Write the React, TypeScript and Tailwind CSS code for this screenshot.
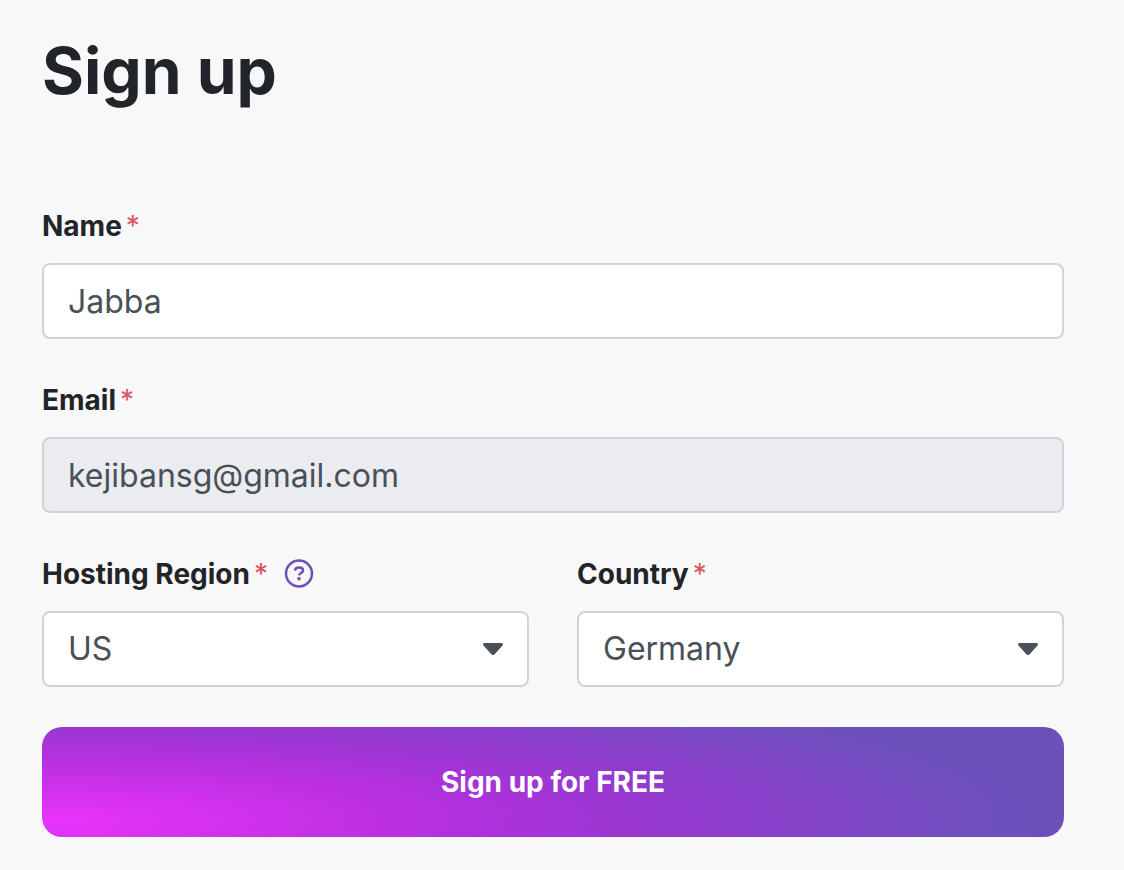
import type { ReactNode } from 'react';

const CONTROL =
  'block w-full h-[76px] px-6 rounded-lg border-2 border-[#ced4da] text-[32px] leading-[48px] text-[#495057] outline-none focus:border-[#6b50b8]';

interface FieldProps {
  id: string;
  label: string;
  hint?: ReactNode;
  children: ReactNode;
}

function Field({ id, label, hint, children }: FieldProps) {
  return (
    <div className="flex flex-col gap-4">
      <div className="flex items-center gap-4 h-[42px]">
        <label htmlFor={id} className="flex gap-1 text-[28px] leading-[42px] font-bold text-[#212529]">
          {label}
          <span className="font-normal text-[#dc5563]">*</span>
        </label>
        {hint}
      </div>
      {children}
    </div>
  );
}

function HelpIcon() {
  return (
    <svg width="30" height="30" viewBox="0 0 30 30" fill="none" stroke="#6b4fbb" aria-hidden="true">
      <circle cx="15" cy="14.500" r="13" strokeWidth="2.500" />
      <path d="M11 11.500C11.300 9.500 12.900 8.500 15 8.500c2.300 0 4 1.100 4 2.900 0 2.600-3.700 2.500-3.900 5" strokeWidth="2.600" />
      <circle cx="15" cy="19.800" r="1.800" fill="#6b4fbb" stroke="none" />
    </svg>
  );
}

interface SelectProps {
  id: string;
  value: string;
  options: string[];
}

function Select({ id, value, options }: SelectProps) {
  return (
    <div className="relative">
      <select id={id} defaultValue={value} className={`${CONTROL} appearance-none bg-white pr-16`}>
        {options.map(o => <option key={o}>{o}</option>)}
      </select>
      <svg
        className="absolute right-[26px] top-1/2 -translate-y-1/2 pointer-events-none"
        width="20"
        height="12"
        viewBox="0 0 20 12"
        fill="#495057"
        aria-hidden="true"
      >
        <path d="M1.500 0h17a1.500 1.500 0 0 1 1 2.600l-7.600 8.500a2.600 2.600 0 0 1-3.800 0L.5 2.600A1.500 1.500 0 0 1 1.500 0z" />
      </svg>
    </div>
  );
}

export default function App() {
  return (
    <main className="min-h-screen bg-[#f8f8f8] pl-[42px] pr-[60px] py-8 font-['Inter',sans-serif]">
      <h1 className="mb-24 text-[64px] leading-[77px] font-bold text-[#212529]">Sign up</h1>

      <form className="flex flex-col gap-10" onSubmit={e => e.preventDefault()}>
        <Field id="name" label="Name">
          <input id="name" type="text" defaultValue="Jabba" required className={`${CONTROL} bg-white`} />
        </Field>

        <Field id="email" label="Email">
          <input id="email" type="email" defaultValue="kejibansg@gmail.com" readOnly className={`${CONTROL} bg-[#eaecf0]`} />
        </Field>

        <div className="grid grid-cols-2 gap-12">
          <Field
            id="region"
            label="Hosting Region"
            hint={<button type="button" aria-label="About hosting regions"><HelpIcon /></button>}
          >
            <Select id="region" value="US" options={['US', 'EU']} />
          </Field>
          <Field id="country" label="Country">
            <Select id="country" value="Germany" options={['Germany', 'France', 'United States']} />
          </Field>
        </div>

        <button
          type="submit"
          className="h-[110px] rounded-[20px] text-[28px] leading-[42px] font-bold text-white bg-[radial-gradient(94%_142%_at_1%_85%,#ea33fb_0%,#bb30e1_36%,#a733d8_50%,#8c3dcb_71%,#6e4fbd_97%,#6b50b8_105%)]"
        >
          Sign up for FREE
        </button>
      </form>
    </main>
  );
}
